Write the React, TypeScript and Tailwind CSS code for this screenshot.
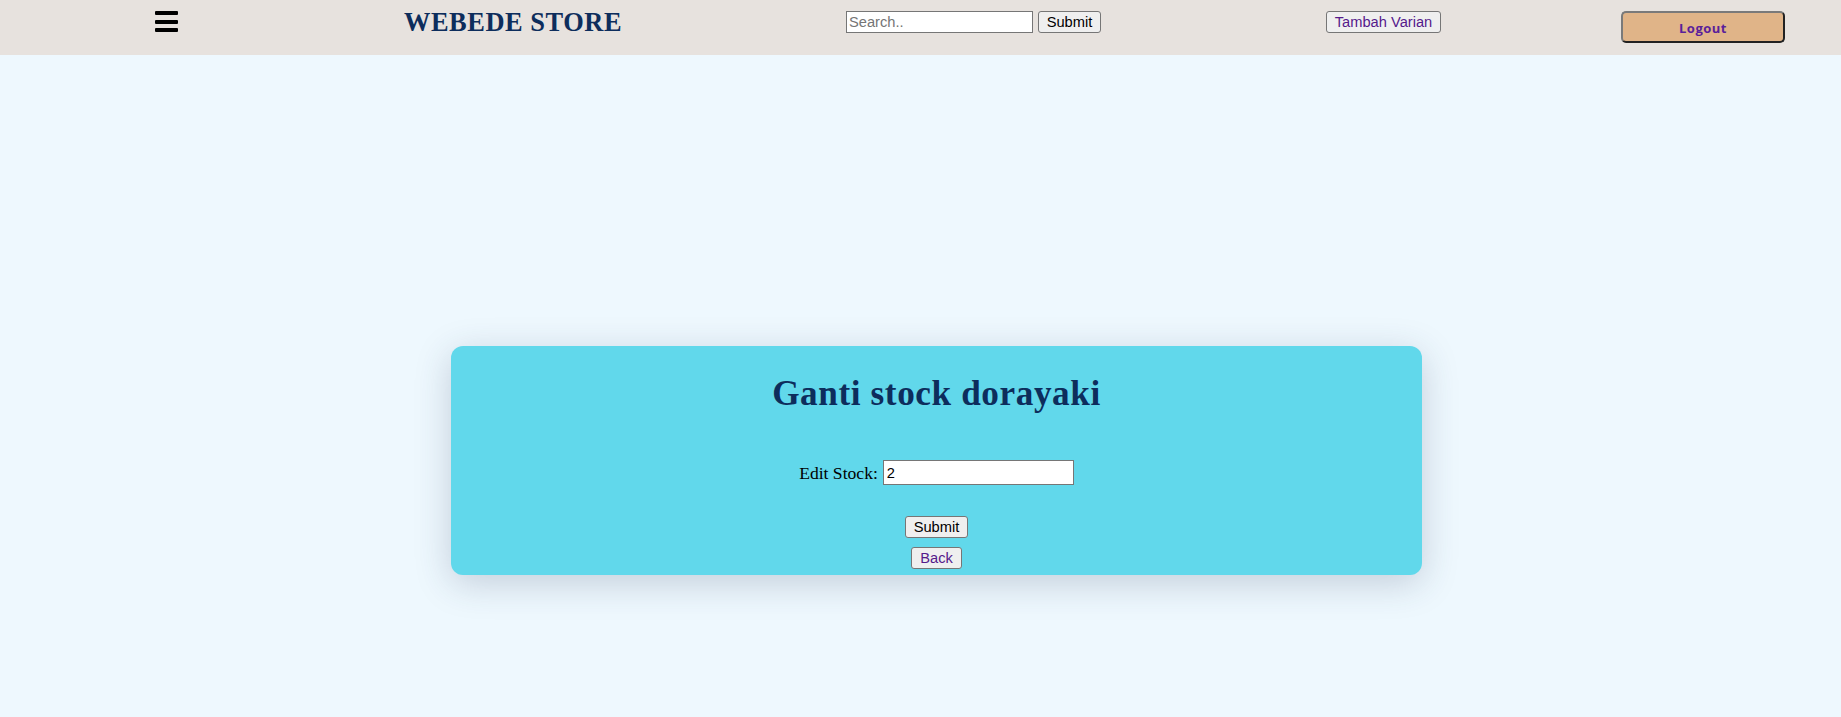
const btn =
    "h-[22px] px-[7px] bg-[#efefef] border border-[#767676] rounded-[3px] text-[14.67px] leading-none font-['Liberation_Sans',Arial,sans-serif]";

function Header() {
    return (
        <header className="h-[55px] bg-[#e7e2de] flex items-start">
            <div className="ml-[155px] mt-[11px] w-[23px] flex flex-col gap-[4.5px]">
                <span className="block h-[4px] bg-black rounded-[1px]" />
                <span className="block h-[4px] bg-black rounded-[1px]" />
                <span className="block h-[4px] bg-black rounded-[1px]" />
            </div>
            <h1 className="ml-[226px] mt-[7px] w-[216px] text-[26.4px] leading-[30px] tracking-[0.55px] font-bold text-[#0d2d5c] font-['Liberation_Serif','Times_New_Roman',serif] whitespace-nowrap">
                WEBEDE STORE
            </h1>
            <form className="ml-[226px] mt-[11px] flex items-center" onSubmit={(e) => e.preventDefault()}>
                <input
                    type="text"
                    placeholder="Search.."
                    className="w-[187px] h-[22px] px-[2px] bg-white border border-[#767676] text-[14.67px] placeholder:text-[#757575] font-['Liberation_Sans',Arial,sans-serif] outline-none"
                />
                <button type="submit" className={`${btn} ml-[5px] w-[63px] text-black`}>
                    Submit
                </button>
            </form>
            <button className={`${btn} ml-[225px] mt-[11px] w-[115px] text-[#551a8b]`}>Tambah Varian</button>
            <button className="ml-[180px] mt-[11px] w-[164px] h-[32px] pt-[3px] bg-[#e0b488] border-2 border-t-[#7a7a7a] border-l-[#7a7a7a] border-r-[#222] border-b-[#222] rounded-[5px] text-[13px] font-bold tracking-[0.5px] text-[#5a1f9a] font-['Open_Sans',sans-serif]">
                Logout
            </button>
        </header>
    );
}

export default function App() {
    return (
        <div className="min-h-[717px] bg-[#eef8fe]">
            <Header />
            <main className="flex justify-center pl-[32px] pt-[291px]">
                <div className="w-[971px] bg-[#61d8eb] rounded-[12px] shadow-[0_8px_36px_rgba(40,60,90,0.22)] pt-[28px] pb-[6px] flex flex-col items-center">
                    <h2 className="text-[35.2px] leading-[40px] tracking-[0.6px] font-bold text-[#0d2d5c] font-['Liberation_Serif','Times_New_Roman',serif]">
                        Ganti stock dorayaki
                    </h2>
                    <div className="mt-[46px] flex items-center">
                        <label className="text-[17.6px] leading-[20px] text-black font-['Liberation_Serif','Times_New_Roman',serif]">
                            Edit Stock:
                        </label>
                        <input
                            type="text"
                            defaultValue="2"
                            className="ml-[5px] w-[191px] h-[25px] px-[3px] bg-white border border-[#767676] text-[14.67px] text-black font-['Liberation_Sans',Arial,sans-serif] outline-none"
                        />
                    </div>
                    <button className={`${btn} mt-[31px] w-[63px] text-black`}>Submit</button>
                    <button className={`${btn} mt-[9px] w-[51px] text-[#551a8b]`}>Back</button>
                </div>
            </main>
        </div>
    );
}
